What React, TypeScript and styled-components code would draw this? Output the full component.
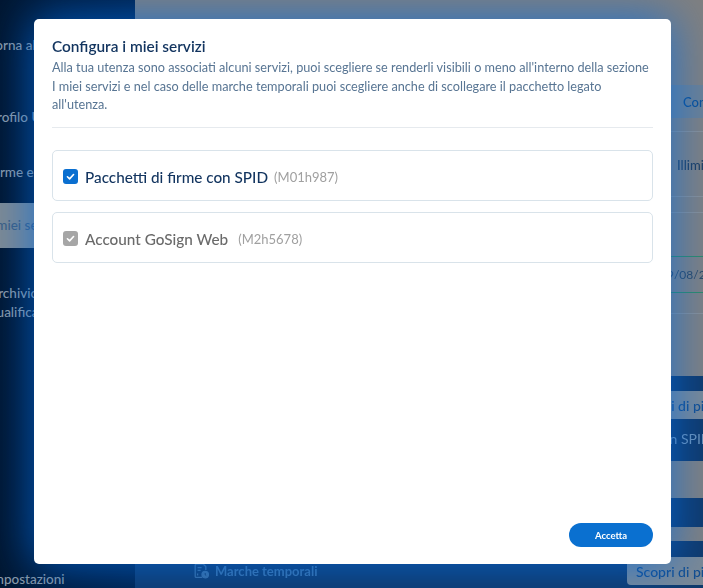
import React from "react";
import styled, { createGlobalStyle } from "styled-components";

const Global = createGlobalStyle`
  html, body { margin: 0; padding: 0; width: 703px; height: 588px; overflow: hidden; background: #808080; }
  #root { width: 703px; height: 588px; }
  * { box-sizing: border-box; }
`;

const Page = styled.div`
  position: relative;
  display: flex;
  width: 703px;
  height: 588px;
  overflow: hidden;
  font-family: "Lato", "Noto Sans", sans-serif;
  filter: blur(0.45px);
`;

const Sidebar = styled.aside`
  flex: 0 0 135px;
  display: flex;
  flex-direction: column;
  overflow: hidden;
  background: linear-gradient(90deg, #001630 0%, #00214a 100%);
`;

const NavItem = styled.div<{ $height: number; $active?: boolean }>`
  flex: 0 0 ${(p) => p.$height}px;
  display: flex;
  align-items: center;
  background: ${(p) => (p.$active ? "#7f8a92" : "transparent")};
`;

const NavText = styled.span`
  display: block;
  margin-left: -11px;
  font-size: 13.5px;
  line-height: 19px;
  font-weight: 500;
  color: #8d9aa6;
  white-space: nowrap;
`;

const ActiveText = styled(NavText)`
  color: #3f5f80;
`;

const Main = styled.main`
  flex: 1;
  min-width: 0;
  overflow: hidden;
`;

const Rows = styled.div`
  width: 640px;
  display: flex;
  flex-direction: column;
`;

const Row = styled.div<{ $height: number; $pad?: number; $bg?: string; $line?: boolean }>`
  height: ${(p) => p.$height}px;
  padding-left: ${(p) => p.$pad ?? 41}px;
  display: flex;
  align-items: center;
  background: ${(p) => p.$bg ?? "transparent"};
  border-bottom: ${(p) => (p.$line ? "1px solid #8c8f92" : "none")};
  white-space: nowrap;
`;

const HeadText = styled.span`
  font-size: 13px;
  font-weight: 500;
  color: #0c4f94;
`;

const CellText = styled.span`
  margin-top: 2px;
  font-size: 13px;
  font-weight: 500;
  color: #1f3c5c;
`;

const DateBox = styled.div`
  height: 37px;
  padding-left: 525px;
  width: 640px;
  display: flex;
  align-items: center;
  border-top: 1px solid #2f8a64;
  border-bottom: 1px solid #2f8a64;
  font-size: 12px;
  color: #2c4660;
`;

const Band = styled.div<{ $height: number; $top?: number; $bottom?: number }>`
  height: ${(p) => p.$height}px;
  padding: ${(p) => p.$top ?? 0}px 0 ${(p) => p.$bottom ?? 0}px 58px;
  background: #10396a;
  display: flex;
  align-items: center;
  white-space: nowrap;
`;

const BandLabel = styled.span`
  font-size: 13px;
  font-weight: 700;
  color: #3f72a6;
`;

const BandIcon = styled.svg`
  width: 16px;
  height: 16px;
  margin-right: 6px;
  color: #3f6f9f;
`;

const MoreButton = styled.div`
  margin-left: auto;
  flex: 0 0 148px;
  height: 28px;
  padding-left: 9px;
  display: flex;
  align-items: center;
  background: #7c8995;
  border-radius: 4px;
  font-size: 14px;
  font-weight: 500;
  color: #134d8e;
`;

const SpidText = styled.span`
  margin-left: auto;
  margin-bottom: 4px;
  flex: 0 0 148px;
  padding-left: 28px;
  font-size: 14px;
  color: #6f93b8;
`;

const Modal = styled.section`
  position: absolute;
  left: 34px;
  top: 19px;
  width: 637px;
  height: 545px;
  padding: 18px 18px 17px;
  display: flex;
  flex-direction: column;
  background: #fff;
  border-radius: 5px;
  box-shadow: 0 0 46px 2px rgba(0, 108, 228, 0.74);
`;

const Title = styled.h2`
  margin: 0;
  font-size: 15.4px;
  line-height: 18px;
  font-weight: 600;
  color: #12345f;
`;

const Description = styled.p`
  margin: 3px 0 0;
  font-size: 12.7px;
  line-height: 18.5px;
  color: #587593;
  white-space: nowrap;
`;

const Divider = styled.hr`
  width: 601px;
  margin: 13px 0 22px;
  border: 0;
  border-top: 1px solid #e6eaee;
`;

const ServiceList = styled.div`
  flex: 1;
  display: flex;
  flex-direction: column;
  gap: 11px;
`;

const ServiceCard = styled.label`
  width: 601px;
  height: 51px;
  padding: 3px 0 0 10px;
  display: flex;
  align-items: center;
  border: 1px solid #d9e3ea;
  border-radius: 5px;
`;

const Check = styled.span<{ $disabled?: boolean }>`
  width: 15px;
  height: 15px;
  margin-right: 7px;
  display: flex;
  align-items: center;
  justify-content: center;
  border-radius: 3px;
  background: ${(p) => (p.$disabled ? "#a6a6a6" : "#0a6fd0")};
`;

const ServiceName = styled.span<{ $disabled?: boolean }>`
  font-size: 15.3px;
  font-weight: 500;
  color: ${(p) => (p.$disabled ? "#6a6a6a" : "#12345f")};
`;

const ServiceCode = styled.span<{ $gap: number }>`
  margin-left: ${(p) => p.$gap}px;
  font-size: 13px;
  color: #a0a0a0;
`;

const Footer = styled.div`
  display: flex;
  justify-content: flex-end;
  width: 601px;
`;

const AcceptButton = styled.button`
  width: 84px;
  height: 24px;
  padding: 0;
  border: 0;
  border-radius: 12px;
  background: #0a70d0;
  color: #fff;
  font-family: inherit;
  font-size: 9.5px;
  font-weight: 700;
`;

const Tick = () => (
  <svg width="9" height="9" viewBox="0 0 10 10" fill="none">
    <path d="M1.6 5.3 4 7.6 8.4 2.8" stroke="#fff" strokeWidth="1.8" strokeLinecap="round" strokeLinejoin="round" />
  </svg>
);

export default function App() {
  return (
    <>
      <Global />
      <Page>
        <Sidebar>
          <NavItem $height={90}><NavText>Torna alla home</NavText></NavItem>
          <NavItem $height={54}><NavText>Profilo Utente</NavText></NavItem>
          <NavItem $height={56}><NavText>Firme e sigilli</NavText></NavItem>
          <NavItem $height={3} />
          <NavItem $height={45} $active><ActiveText>I miei servizi</ActiveText></NavItem>
          <NavItem $height={110}>
            <NavText>Archivio<br />qualificato</NavText>
          </NavItem>
          <NavItem $height={212} />
          <NavItem $height={18}><NavText>Impostazioni</NavText></NavItem>
        </Sidebar>
        <Main>
          <Rows>
            <Row $height={85} />
            <Row $height={33} $pad={548} $bg="#6d8093"><HeadText>Contratto</HeadText></Row>
            <Row $height={14} $line />
            <Row $height={65} $pad={542} $line><CellText>Illimitato</CellText></Row>
            <Row $height={16} $line />
            <Row $height={43} />
            <DateBox>19/08/2024</DateBox>
            <Row $height={21} $line />
            <Row $height={62} />
            <Band $height={43} $top={15}>
              <MoreButton>Scopri di più</MoreButton>
            </Band>
            <Band $height={42}>
              <SpidText>con SPID</SpidText>
            </Band>
            <Row $height={37} />
            <Band $height={29} />
            <Row $height={14} />
            <Band $height={47} $top={16} $bottom={3}>
              <BandIcon viewBox="0 0 16 16" fill="none" stroke="currentColor" strokeWidth="1.3">
                <path d="M9 14.4H3.2a1 1 0 0 1-1-1V2.2a1 1 0 0 1 1-1h7.2l2.4 2.4V7" />
                <path d="M4.6 4.6h4M4.6 7.4h3M4.6 10.4v2" />
                <circle cx="12.2" cy="11.6" r="3.2" fill="currentColor" />
                <path d="M12.2 10v1.8l1 .7" stroke="#10396a" strokeWidth="0.9" />
              </BandIcon>
              <BandLabel>Marche temporali</BandLabel>
              <MoreButton>Scopri di più</MoreButton>
            </Band>
          </Rows>
        </Main>
        <Modal>
          <Title>Configura i miei servizi</Title>
          <Description>
            Alla tua utenza sono associati alcuni servizi, puoi scegliere se renderli visibili o meno all'interno della sezione<br />
            I miei servizi e nel caso delle marche temporali puoi scegliere anche di scollegare il pacchetto legato<br />
            all'utenza.
          </Description>
          <Divider />
          <ServiceList>
            <ServiceCard>
              <Check><Tick /></Check>
              <ServiceName>Pacchetti di firme con SPID</ServiceName>
              <ServiceCode $gap={6}>(M01h987)</ServiceCode>
            </ServiceCard>
            <ServiceCard>
              <Check $disabled><Tick /></Check>
              <ServiceName $disabled>Account GoSign Web</ServiceName>
              <ServiceCode $gap={10}>(M2h5678)</ServiceCode>
            </ServiceCard>
          </ServiceList>
          <Footer>
            <AcceptButton>Accetta</AcceptButton>
          </Footer>
        </Modal>
      </Page>
    </>
  );
}
